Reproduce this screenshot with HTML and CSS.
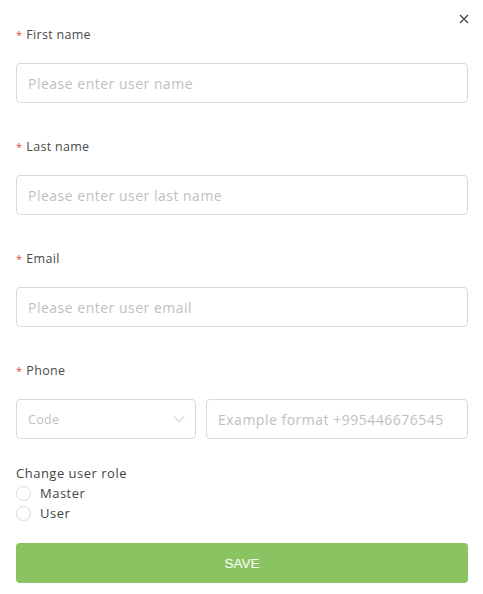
FILE: index.html
```html
<!DOCTYPE html>
<html lang="en">
<head>
  <meta charset="UTF-8">
  <title>User form</title>
  <link rel="stylesheet" href="styles.css">
</head>
<body>
  <button type="button" class="close" aria-label="Close">
    <svg width="10" height="10" viewBox="0 0 10 10"><path d="M1 1L9 9M9 1L1 9" stroke="#444" stroke-width="1.2" fill="none"/></svg>
  </button>
  <form class="form" novalidate>
    <div class="field">
      <label class="label"><span class="req">*</span>First name</label>
      <input type="text" class="input" placeholder="Please enter user name" />
    </div>

    <div class="field">
      <label class="label"><span class="req">*</span>Last name</label>
      <input type="text" class="input" placeholder="Please enter user last name" />
    </div>

    <div class="field">
      <label class="label"><span class="req">*</span>Email</label>
      <input type="email" class="input" placeholder="Please enter user email" />
    </div>

    <div class="field">
      <label class="label"><span class="req">*</span>Phone</label>
      <div class="phone">
        <div class="select">
          <span class="select-text">Code</span>
          <svg width="12" height="8" viewBox="0 0 12 8"><path d="M1 1.5L6 6.5L11 1.5" stroke="#bdbdbd" stroke-width="1" fill="none"/></svg>
        </div>
        <input type="tel" class="input" placeholder="Example format +995446676545" />
      </div>
    </div>

    <div class="roles">
      <div class="roles-title">Change user role</div>
      <label class="radio"><span class="circle"></span>Master</label>
      <label class="radio"><span class="circle"></span>User</label>
    </div>

    <button type="submit" class="save">SAVE</button>
  </form>
</body>
</html>
```

FILE: styles.css
```css
body {
  margin: 0;
  padding: 0 15px 0 16px;
  font-family: "Open Sans", "Liberation Sans", sans-serif;
  color: #444;
  background: #fff;
  letter-spacing: 0.3px;
}

.close {
  position: absolute;
  top: 14px;
  right: 14px;
  border: none;
  background: none;
  padding: 0;
  width: 10px;
  height: 10px;
  line-height: 0;
  cursor: pointer;
}

.form {
  padding-top: 25px;
}

.field {
  margin-bottom: 34px;
}

.label {
  display: block;
  font-size: 12.5px;
  line-height: 20px;
  height: 20px;
  margin-bottom: 18px;
  color: #4a4a4a;
}

.req {
  color: #e5484d;
  font-size: 11px;
  margin: 0 4px 0 0;
}

.input {
  display: block;
  box-sizing: border-box;
  width: 100%;
  height: 40px;
  padding: 0 11px;
  border: 1px solid #d9d9d9;
  border-radius: 4px;
  font-family: inherit;
  font-size: 14px;
  letter-spacing: 0.5px;
  color: #444;
  outline: none;
}

.input::placeholder {
  color: #bfbfbf;
}

.phone {
  display: flex;
  gap: 10px;
}

.select {
  box-sizing: border-box;
  flex: 0 0 180px;
  height: 40px;
  border: 1px solid #d9d9d9;
  border-radius: 4px;
  display: flex;
  align-items: center;
  justify-content: space-between;
  padding: 0 10px 0 11px;
}

.select-text {
  font-size: 12.5px;
  color: #bfbfbf;
}

.phone .input {
  flex: 1;
}

.roles {
  margin-top: -10px;
  margin-bottom: 20px;
  font-size: 13px;
  letter-spacing: 0.5px;
}

.roles-title {
  line-height: 20px;
}

.radio {
  display: flex;
  align-items: center;
  line-height: 20px;
  gap: 9px;
}

.circle {
  box-sizing: border-box;
  width: 15px;
  height: 15px;
  border: 1px solid #d9d9d9;
  border-radius: 50%;
}

.save {
  display: block;
  width: 100%;
  height: 40px;
  border: none;
  border-radius: 4px;
  background: #8bc363;
  color: #fff;
  font-family: "Liberation Sans", Arial, sans-serif;
  font-size: 13.5px;
  letter-spacing: 0;
  cursor: pointer;
}
```
